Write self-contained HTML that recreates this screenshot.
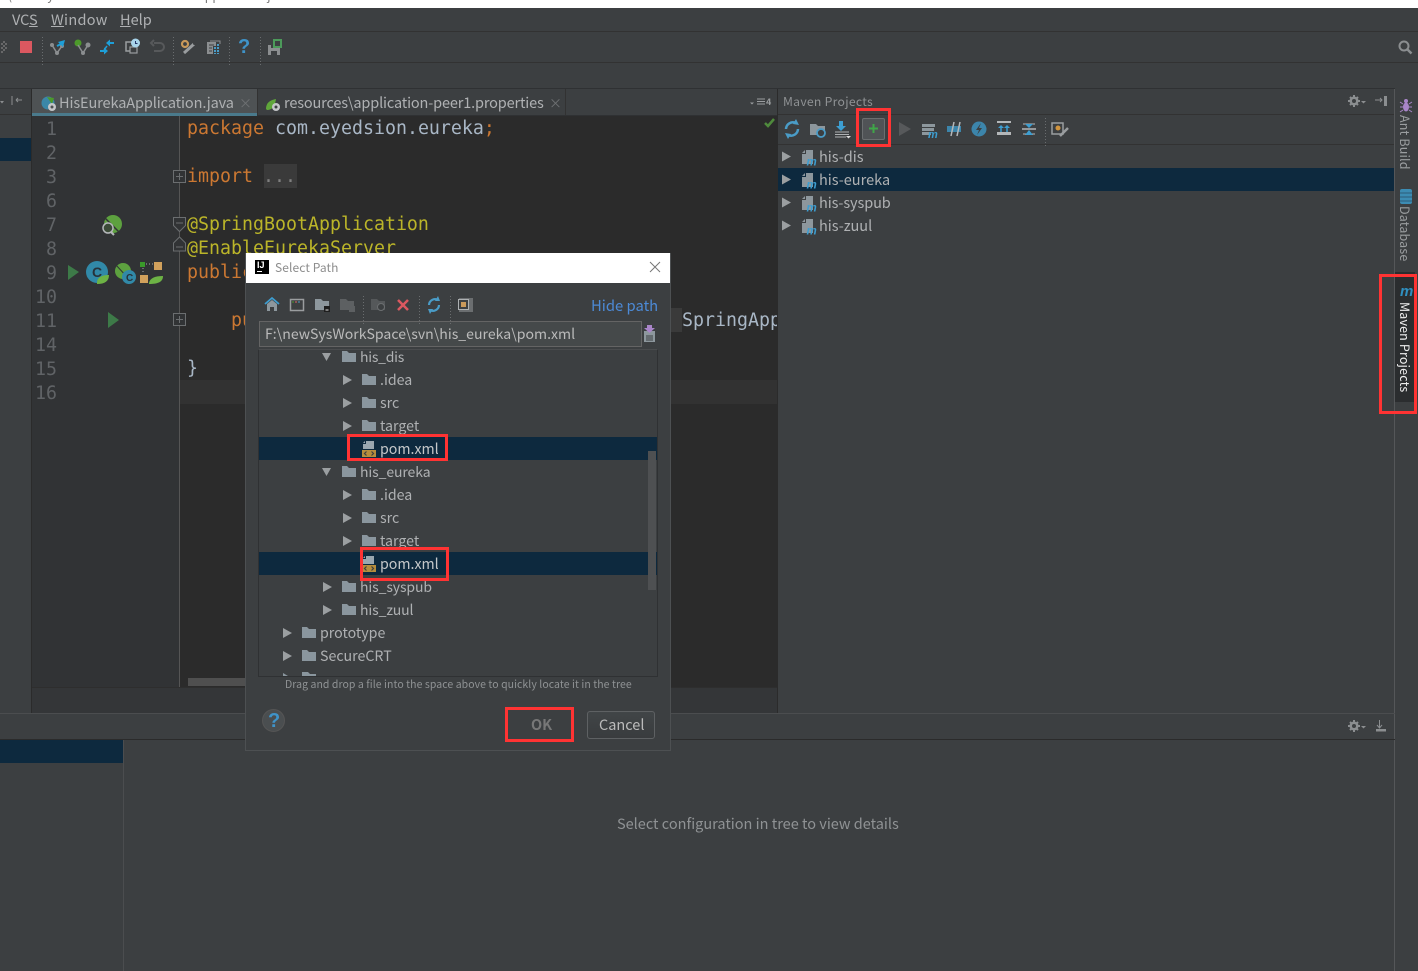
<!DOCTYPE html>
<html><head><meta charset="utf-8"><title>Select Path</title>
<style>
html,body{margin:0;padding:0;background:#3c3f41;width:1418px;height:971px;overflow:hidden}
#r{position:relative;width:1418px;height:971px;overflow:hidden;font-family:"Noto Sans CJK SC","Liberation Sans",sans-serif;font-size:14.5px;color:#afb1b3}
.b{position:absolute}
.t{position:absolute;white-space:nowrap}
.c{position:absolute;white-space:nowrap;font-family:"DejaVu Sans Mono","Liberation Mono",monospace;font-size:18.27px;line-height:24px;height:24px;color:#a9b7c6}
.n{position:absolute;width:30px;left:27px;text-align:right;font-family:"DejaVu Sans Mono","Liberation Mono",monospace;font-size:18.27px;line-height:24px;color:#606366}
.k{color:#cc7832}.a{color:#bbb529}
.ro{position:absolute;white-space:nowrap;line-height:23px;height:23px;color:#afb1b3;font-size:14.5px}
.d{font-size:14.2px;margin-top:1px}
.u{font-size:14px;letter-spacing:-.1px;margin-top:1px}
.rd{position:absolute;border:3px solid #f33;box-sizing:border-box}
.v{position:absolute;writing-mode:vertical-rl;white-space:nowrap;font-size:12.5px;line-height:14px;letter-spacing:.15px}
svg{position:absolute;left:0;top:0;overflow:visible}
</style></head><body><div id="r">
<svg width="0" height="0"><defs>
<g id="fo"><path d="M0 1h5l2 2h7v9H0z" fill="#8a969e"/></g>
<g id="ar"><path d="M0 0l9 5-9 5z" fill="#9b9fa1"/></g>
<g id="mv"><path d="M5 1h7v14H1V5h4z" fill="#8d979d"/><path d="M1 4l3-3v3z" fill="#8d979d"/><text x="5.500" y="16.500" font-family="Liberation Sans" font-style="italic" font-weight="700" font-size="11.500" fill="#3d9ed1">m</text></g>
<g id="pm"><path d="M4 0h8v8H1V3h3z" fill="#9aa7b0"/><path d="M1 2l2-2v2z" fill="#9aa7b0"/><rect y="9" width="14" height="7" fill="#b68d3c"/><path d="M4.500 10.500l-2 2 2 2M9.500 10.500l2 2-2 2" fill="none" stroke="#3c3f41" stroke-width="1.200"/></g>
<g id="dt"><path d="M0 0v28" stroke="#6a6d6f" stroke-width="1" stroke-dasharray="1 2"/></g>
<g id="ge"><path d="M1354 95v12M1348 101h12M1350 97l8 8M1358 97l-8 8" stroke="#8b8e90" stroke-width="2"/><circle cx="1354" cy="101" r="4.500" fill="#8b8e90"/><circle cx="1354" cy="101" r="2" fill="#3c3f41"/><path d="M1361 101h5l-2.500 2.500z" fill="#8b8e90"/></g>
</defs></svg>

<!-- title strip -->
<div class="b" style="left:0;top:0;width:1418px;height:8px;background:#fff;overflow:hidden"><div class="t" style="left:8px;top:-13px;font-size:12px;color:#777;letter-spacing:.2px">(com.eyedsion.eureka.HisEurekaApplication.java - IntelliJ IDEA 2017.2.2</div></div>
<!-- menu -->
<div class="b" style="left:0;top:8px;width:1418px;height:23px;background:#3c3f41"></div>
<div class="t" style="left:12px;top:9px;line-height:22px">VC<u>S</u></div>
<div class="t" style="left:51px;top:9px;line-height:22px;letter-spacing:.3px"><u>W</u>indow</div>
<div class="t" style="left:120px;top:9px;line-height:22px"><u>H</u>elp</div>
<div class="b" style="left:0;top:31px;width:1418px;height:1px;background:#323232"></div>
<div class="b" style="left:0;top:62px;width:1418px;height:1px;background:#323232"></div>
<div class="b" style="left:0;top:88px;width:1395px;height:1px;background:#2f3133"></div>

<!-- left strip -->
<div class="b" style="left:0;top:89px;width:31px;height:624px;background:#3c3f41"></div>
<div class="b" style="left:0;top:114px;width:31px;height:1px;background:#323232"></div>
<div class="b" style="left:0;top:138px;width:31px;height:23px;background:#0d293e"></div>
<div class="b" style="left:31px;top:89px;width:1px;height:624px;background:#2b2b2b"></div>

<!-- tabs -->
<div class="b" style="left:32px;top:89px;width:746px;height:26px;background:#3c3f41"></div>
<div class="b" style="left:32px;top:89px;width:225px;height:26px;background:#4e5254"></div>
<div class="b" style="left:32px;top:113px;width:225px;height:3px;background:#4a7a8c"></div>
<div class="b" style="left:257px;top:89px;width:1px;height:26px;background:#323232"></div>
<div class="b" style="left:565px;top:89px;width:1px;height:26px;background:#323232"></div>
<div class="b" style="left:257px;top:115px;width:521px;height:1px;background:#2f3133"></div>
<div class="t" style="left:59px;top:92px;line-height:22px;letter-spacing:-.1px">HisEurekaApplication.java</div>
<div class="t" style="left:239px;top:92px;line-height:22px;color:#6f7274;font-size:13px">×</div>
<div class="t" style="left:284px;top:92px;line-height:22px;letter-spacing:-.15px">resources\application-peer1.properties</div>
<div class="t" style="left:549px;top:92px;line-height:22px;color:#6f7274;font-size:13px">×</div>
<div class="t" style="left:766px;top:96px;font-size:9px;line-height:12px;color:#9a9d9f;font-weight:700">4</div>

<!-- gutter + editor -->
<div class="b" style="left:32px;top:116px;width:147px;height:571px;background:#313335"></div>
<div class="b" style="left:179px;top:116px;width:1px;height:571px;background:#555"></div>
<div class="b" style="left:180px;top:116px;width:597px;height:571px;background:#2b2b2b"></div>
<div class="b" style="left:180px;top:380px;width:597px;height:24px;background:#323232"></div>
<div class="b" style="left:188px;top:678px;width:60px;height:8px;background:#4f4f4f"></div>
<div class="b" style="left:32px;top:687px;width:746px;height:26px;background:#343638;border-top:1px solid #2e2e2e;box-sizing:border-box"></div>
<div class="b" style="left:777px;top:89px;width:1px;height:624px;background:#2b2b2b"></div>

<div class="n" style="top:118px">1</div><div class="n" style="top:142px">2</div><div class="n" style="top:166px">3</div><div class="n" style="top:190px">6</div><div class="n" style="top:214px">7</div><div class="n" style="top:238px">8</div><div class="n" style="top:262px">9</div><div class="n" style="top:286px">10</div><div class="n" style="top:310px">11</div><div class="n" style="top:334px">14</div><div class="n" style="top:358px">15</div><div class="n" style="top:382px">16</div>

<div class="c" style="left:187px;top:117px"><span class="k">package</span> com.eyedsion.eureka<span class="k">;</span></div>
<div class="c k" style="left:187px;top:165px">import</div>
<div class="b" style="left:264px;top:164px;width:33px;height:24px;background:#3a3a3a"></div>
<div class="c" style="left:263px;top:165px;color:#808080">...</div>
<div class="c a" style="left:187px;top:213px">@SpringBootApplication</div>
<div class="c a" style="left:187px;top:237px">@EnableEurekaServer</div>
<div class="c k" style="left:187px;top:261px">public</div>
<div class="c k" style="left:231px;top:309px">pu</div>
<div class="b" style="left:670px;top:308px;width:12px;height:24px;background:#3a3a3a"></div>
<div class="b" style="left:682px;top:308px;width:95px;height:24px;overflow:hidden"><div class="c" style="left:0;top:1px">SpringApplication</div></div>
<div class="c" style="left:187px;top:357px">}</div>

<!-- Maven panel -->
<div class="b" style="left:778px;top:89px;width:616px;height:25px;background:#3c3f41"></div>
<div class="b" style="left:778px;top:114px;width:616px;height:1px;background:#323232"></div>
<div class="b" style="left:778px;top:144px;width:616px;height:1px;background:#323232"></div>
<div class="t" style="left:783px;top:91px;font-size:12.2px;line-height:20px;color:#8f9294;letter-spacing:.28px">Maven Projects</div>
<div class="b" style="left:778px;top:168px;width:616px;height:23px;background:#0d293e"></div>
<div class="ro" style="left:819px;top:145px">his-dis</div>
<div class="ro" style="left:819px;top:168px">his-eureka</div>
<div class="ro" style="left:819px;top:191px;letter-spacing:-.1px">his-syspub</div>
<div class="ro" style="left:819px;top:214px">his-zuul</div>
<div class="b" style="left:862px;top:118px;width:23px;height:22px;background:#505356;border:1px solid #6b6e70;border-radius:2px;box-sizing:border-box"></div>

<!-- right strip -->
<div class="b" style="left:1394px;top:89px;width:1px;height:882px;background:#555759"></div>
<div class="b" style="left:1395px;top:272px;width:20px;height:130px;background:#2b2d2f"></div>
<div class="v" style="left:1398px;top:115px;color:#9b9ea0">Ant Build</div>
<div class="v" style="left:1398px;top:206px;color:#9b9ea0">Database</div>
<div class="v" style="left:1398px;top:302px;color:#eee">Maven Projects</div>

<!-- bottom panel -->
<div class="b" style="left:0;top:713px;width:1395px;height:1px;background:#4b4d4f"></div>
<div class="b" style="left:0;top:739px;width:1395px;height:1px;background:#2b2b2b"></div>
<div class="b" style="left:0;top:740px;width:123px;height:23px;background:#0d293e"></div>
<div class="b" style="left:123px;top:740px;width:1px;height:231px;background:#4b4d4f"></div>
<div class="t" style="left:617px;top:813px;line-height:22px;color:#8f9294;font-size:14.5px">Select configuration in tree to view details</div>

<div class="t" style="left:238px;top:35px;font-family:'Liberation Sans';font-weight:700;font-size:20px;line-height:24px;color:#3f93c8">?</div>

<!-- base icons -->
<svg width="1418" height="971">
<g id="tb">
<path d="M1 44h2M5 44h2M3 42h2M3 46h2M1 48h2M5 48h2M3 50h2M1 52h2" stroke="#777" stroke-width="1.500"/>
<rect x="20" y="41" width="12" height="12" fill="#db5860"/>
<use href="#dt" x="42.500" y="37"/>
<circle cx="52" cy="45" r="2" fill="#8b8e90"/><circle cx="62" cy="46" r="2" fill="#8b8e90"/><circle cx="57" cy="53" r="2" fill="#8b8e90"/><path d="M52 45l5 8 5-7" stroke="#8b8e90" fill="none" stroke-width="1.500"/><path d="M65 40l-2 7-5-5z" fill="#1e9fd8"/><path d="M61 44l-4 2" stroke="#1e9fd8" stroke-width="2"/>
<circle cx="78" cy="43" r="3.500" fill="#4c9a2a"/><circle cx="88" cy="45" r="2.500" fill="#8b8e90"/><circle cx="83" cy="53" r="2" fill="#8b8e90"/><path d="M78 45l5 8 5-8" stroke="#8b8e90" fill="none" stroke-width="1.500"/>
<path d="M114 43h-6M100 51h6" stroke="#1e9fd8" stroke-width="2"/><path d="M106 43l4-3.500v7zM108 51l-4-3.500v7z" fill="#1e9fd8"/><path d="M107 46l-3 4" stroke="#1e9fd8" stroke-width="1.500"/>
<rect x="126" y="42" width="10" height="9" fill="none" stroke="#9a9d9f" stroke-width="1.500"/><rect x="130" y="47" width="7" height="6" fill="#3c3f41" stroke="#9a9d9f" stroke-width="1.200"/><circle cx="135.500" cy="43" r="4.500" fill="#a8d4ea"/><path d="M135.500 41v2.500h2" stroke="#236" fill="none"/>
<path d="M154 43h6a4 4 0 0 1 0 8h-6M154 40l-3 3 3 3" fill="none" stroke="#57595b" stroke-width="2"/>
<use href="#dt" x="173.500" y="37"/>
<path d="M184 53l10-9" stroke="#9a9d9f" stroke-width="3"/><circle cx="194.500" cy="43.500" r="1.500" fill="#3c3f41"/><circle cx="185" cy="44" r="3" fill="#3c3f41" stroke="#c9995a" stroke-width="2.200"/>
<path d="M207 42h9v4h-3v8h-6z" fill="#8b8e90"/><path d="M209 45h5M209 48h3M209 51h3" stroke="#3c3f41"/><path d="M214 47h2v2h-2zM217 47h2v2h-2zM214 50h2v2h-2zM217 50h2v2h-2zM214 53h2v1h-2zM217 53h2v1h-2zM217 44h2v2h-2z" fill="#4a9cc7"/><path d="M210 41h10v3" fill="none" stroke="#8b8e90"/>
<use href="#dt" x="229.500" y="37"/>
<use href="#dt" x="260.500" y="37"/>
<path d="M268 45h10l2 2v8h-12z" fill="#8b8e90"/><rect x="271" y="45" width="6" height="3" fill="#3c3f41"/><rect x="271" y="51" width="6" height="4" fill="#3c3f41"/><path d="M273 39h9v9h-9z" fill="#4c9a5a"/><rect x="275" y="41" width="5" height="5" fill="#3c3f41"/>
<circle cx="1404" cy="46" r="4.500" fill="none" stroke="#8b8e90" stroke-width="2"/><path d="M1407.500 49.500l4 4" stroke="#8b8e90" stroke-width="2.500"/>
</g>
<!-- tab icons -->
<path d="M0 101h4l-2 2.500z" fill="#8b8e90"/>
<circle cx="48" cy="103" r="6.500" fill="#3b87a8"/><path d="M47 97l7 1-2 6z" fill="#4c9a2a"/><circle cx="52" cy="107" r="4" fill="#c4c6c8"/><circle cx="52" cy="107" r="1.500" fill="#4e5254"/>
<path d="M266 109c0-7 5-9 10-10-1 6-3 11-9 11z" fill="#5fa63a"/><circle cx="276" cy="107" r="4" fill="#c4c6c8"/><circle cx="276" cy="107" r="1.500" fill="#3c3f41"/>
<path d="M12 96v9M16 100h6M16 100l2-2M16 100l2 2" stroke="#8b8e90" fill="none"/>
<path d="M750 102.500h4l-2 2z" fill="#9a9d9f"/><path d="M757 99h8M757 101.500h8M757 104h8" stroke="#9a9d9f"/>
<path d="M765 123l3 3 6-7" stroke="#4f8a3c" stroke-width="2.500" fill="none"/>
<!-- gutter icons -->
<circle cx="113" cy="224" r="9" fill="#5da13f"/><path d="M105 218l14 14" stroke="#313335" stroke-width="1.500"/><circle cx="108" cy="228" r="5" fill="#3c4b38" stroke="#b4b7b9" stroke-width="1.500"/><path d="M111 232l3 3" stroke="#b4b7b9" stroke-width="2"/>
<path d="M68 265l11 7-11 8z" fill="#3d7a48"/>
<circle cx="97" cy="272" r="11" fill="#3189a8"/><text x="92" y="277" font-family="Liberation Sans" font-size="14" font-weight="700" fill="#27323a">C</text><path d="M97 283c0-6 5-8 12-8 0 6-4 9-12 9z" fill="#6db345"/>
<circle cx="123" cy="271" r="8" fill="#5da13f"/><path d="M116 265l12 13" stroke="#313335"/><circle cx="129" cy="277" r="7" fill="#3189a8"/><text x="126" y="281" font-family="Liberation Sans" font-size="10" font-weight="700" fill="#27323a">C</text>
<rect x="140" y="262" width="5" height="5" fill="#3a9a2a"/><rect x="154" y="262" width="8" height="8" fill="#d1a15c"/><rect x="140" y="275" width="8" height="8" fill="#d1a15c"/><path d="M146 264h7M143 268v6" stroke="#a5a8aa" stroke-dasharray="1 2"/><path d="M149 283c1-5 6-7 14-7 0 6-5 8-14 8z" fill="#6db345"/>
<path d="M108 312l11 8-11 8z" fill="#3d7a48"/>
<!-- fold marks -->
<g fill="#313335" stroke="#6b6e70"><rect x="173.500" y="170.500" width="12" height="12"/><path d="M176 176.500h7M179.500 173v7"/><path d="M173.500 217.500h12v8l-6 6-6-6z"/><path d="M176 223h7"/><path d="M179.500 237l6 6v8h-12v-8z"/><path d="M176 247h7"/><rect x="173.500" y="313.500" width="12" height="12"/><path d="M176 319.500h7M179.500 316v7"/></g>
<!-- maven toolbar -->
<path d="M786 129a7 7 0 0 1 10-6M798 129a7 7 0 0 1-10 6" stroke="#4a9cc7" stroke-width="2.500" fill="none"/><path d="M796 119l3 6-6-1zM788 139l-3-6 6 1z" fill="#4a9cc7"/>
<path d="M810 124h6l2 2h7v9h-15z" fill="#8d979d"/><circle cx="821" cy="133" r="4" fill="#3c3f41" stroke="#4a9cc7" stroke-width="1.800"/>
<path d="M839 121h4v5h3l-5 5-5-5h3z" fill="#3d9ed1"/><path d="M835 132h14M835 134.500h14M835 137h11" stroke="#aeb1b3"/><path d="M846 136h5l-2.500 2.500z" fill="#ddd"/>
<path d="M869 128.500h9M873.500 124v9" stroke="#3fa648" stroke-width="2"/>
<path d="M899 122l12 7-12 7z" fill="#57595b"/>
<path d="M922 124h13v3h-13zM922 128h12v3h-12M922 132h9v3h-9" fill="#8d979d"/><text x="928" y="138" font-family="Liberation Sans" font-style="italic" font-weight="700" font-size="11" fill="#3d9ed1">m</text>
<rect x="947" y="126" width="14" height="6" fill="#3c85ab"/><path d="M951 136l3-14M957 136l3-14" stroke="#b4b7b9" stroke-width="1.500"/>
<circle cx="979" cy="129" r="7.500" fill="#3c85ab"/><path d="M981 123l-5 7h3l-2 5 5-7h-3z" fill="#3c3f41"/>
<path d="M997 122h14" stroke="#b4b7b9" stroke-width="2"/><path d="M1001 132v-5M1007 132v-5" stroke="#3d9ed1" stroke-width="1.500"/><path d="M998 128l3-3 3 3zM1004 128l3-3 3 3z" fill="#3d9ed1"/><rect x="997" y="132" width="14" height="3" fill="#b4b7b9"/>
<path d="M1022 129h14" stroke="#b4b7b9" stroke-width="1.500"/><path d="M1023 124h12M1023 134h12" stroke="#b4b7b9"/><path d="M1029 128l-4-4h8zM1029 130l-4 5h8z" fill="#3d9ed1"/>
<use href="#dt" x="1045.500" y="118"/>
<rect x="1052" y="123" width="11" height="11" fill="none" stroke="#9a9d9f" stroke-width="1.500"/><circle cx="1058" cy="128" r="2.500" fill="#d1953f"/><path d="M1060 136l8-8" stroke="#9a9d9f" stroke-width="2.500"/>
<!-- maven rows -->
<use href="#ar" x="782" y="151.500"/><use href="#ar" x="782" y="174.500"/><use href="#ar" x="782" y="197.500"/><use href="#ar" x="782" y="220.500"/>
<use href="#mv" x="801" y="149"/><use href="#mv" x="801" y="172"/><use href="#mv" x="801" y="195"/><use href="#mv" x="801" y="218"/>
<!-- header right -->
<use href="#ge"/>
<path d="M1375 100h7M1380 98l2 2-2 2" stroke="#8b8e90" fill="none"/><rect x="1384" y="96" width="3" height="10" fill="#8b8e90"/>
<use href="#ge" y="625"/>
<path d="M1379.500 720v8M1377 725l2.500 3 2.500-3" stroke="#8b8e90" fill="none"/><rect x="1376" y="729" width="10" height="2.500" fill="#8b8e90"/>
<!-- strip icons -->
<ellipse cx="1406" cy="107" rx="3" ry="4.500" fill="#a985c9"/><circle cx="1406" cy="101" r="2" fill="#a985c9"/><path d="M1400 102l3 2M1412 102l-3 2M1400 107h3M1412 107h-3M1400 112l3-2M1412 112l-3-2" stroke="#a985c9"/>
<rect x="1400" y="189" width="12" height="15" rx="2" fill="#3c8cb3"/><path d="M1400 193h12M1400 197h12M1400 201h12" stroke="#2c5d78"/>
<text x="1400" y="296" font-family="Liberation Sans" font-style="italic" font-weight="700" font-size="15" fill="#2f8fc0">m</text>
</svg>

<!-- DIALOG -->
<div class="b" style="left:245px;top:253px;width:426px;height:498px;background:#3c3f41;border:1px solid #4d5052;box-sizing:border-box"></div>
<div class="b" style="left:246px;top:253px;width:424px;height:30px;background:#fff"></div>
<div class="b" style="left:255px;top:260px;width:14px;height:14px;background:#000"></div>
<div class="t" style="left:257px;top:260px;font-family:'Liberation Sans';font-weight:700;font-size:9px;line-height:10px;color:#fff">IJ</div>
<div class="b" style="left:257px;top:271px;width:5px;height:1px;background:#fff"></div>
<div class="t" style="left:275px;top:258px;font-size:12px;line-height:20px;color:#8d8d8d;letter-spacing:.1px">Select Path</div>
<div class="t" style="left:591px;top:295px;font-size:14.8px;line-height:22px;color:#4c8ad6">Hide path</div>
<div class="b" style="left:259px;top:321px;width:383px;height:26px;background:#45494a;border:1px solid #646464;box-sizing:border-box"></div>
<div class="t" style="left:265px;top:323px;line-height:22px;font-size:14.1px;color:#bbb">F:\newSysWorkSpace\svn\his_eureka\pom.xml</div>
<div class="b" style="left:258px;top:349px;width:400px;height:328px;border:1px solid #2f3133;border-top:1px solid #4a4c4e;box-sizing:border-box;background:#3c3f41"></div>
<div class="b" style="left:259px;top:437px;width:398px;height:23px;background:#0d293e"></div>
<div class="b" style="left:259px;top:552px;width:398px;height:23px;background:#0d293e"></div>
<div class="b" style="left:648px;top:451px;width:8px;height:139px;background:#4e5052"></div>

<div class="ro u" style="left:360px;top:345px;letter-spacing:-.25px">his_dis</div>
<div class="ro d" style="left:380px;top:368px">.idea</div>
<div class="ro d" style="left:380px;top:391px">src</div>
<div class="ro d" style="left:380px;top:414px">target</div>
<div class="ro d" style="left:380px;top:437px;color:#c5c8ca">pom.xml</div>
<div class="ro u" style="left:360px;top:460px">his_eureka</div>
<div class="ro d" style="left:380px;top:483px">.idea</div>
<div class="ro d" style="left:380px;top:506px">src</div>
<div class="ro d" style="left:380px;top:529px">target</div>
<div class="ro d" style="left:380px;top:552px;color:#c5c8ca">pom.xml</div>
<div class="ro u" style="left:360px;top:575px">his_syspub</div>
<div class="ro u" style="left:360px;top:598px">his_zuul</div>
<div class="ro d" style="left:320px;top:621px">prototype</div>
<div class="ro d" style="left:320px;top:644px">SecureCRT</div>
<div class="t" style="left:285px;top:677px;font-size:10.500px;line-height:15px;color:#8f9294;letter-spacing:.06px">Drag and drop a file into the space above to quickly locate it in the tree</div>

<div class="b" style="left:587px;top:711px;width:68px;height:28px;border:1px solid #5e6163;border-radius:3px;background:linear-gradient(#414547,#393c3e);box-sizing:border-box"></div>
<div class="t" style="left:599px;top:714px;line-height:22px;color:#bbb">Cancel</div>
<div class="t" style="left:531px;top:714px;line-height:22px;color:#777;font-weight:700">OK</div>
<div class="b" style="left:262px;top:709px;width:23px;height:23px;border-radius:50%;background:#4a4e50;border:1px solid #555;box-sizing:border-box"></div>
<div class="t" style="left:268px;top:709px;font-family:'Liberation Sans';font-weight:700;font-size:20px;line-height:24px;color:#3f93c8">?</div>

<svg width="1418" height="971">
<!-- dialog toolbar -->
<path d="M267 304v7h3v-4h4v4h3v-7l-5-4z" fill="#8d979d"/><path d="M265 304l7-6 7 6" fill="none" stroke="#3d9ed1" stroke-width="1.800"/>
<rect x="290.500" y="299.500" width="13" height="11" fill="none" stroke="#9a9d9f" stroke-width="1.500"/><path d="M292 302h2" stroke="#4c9a2a"/><path d="M295 302h2" stroke="#d66"/><path d="M298 302h2" stroke="#4a9cc7"/>
<path d="M315 299h6l2 2h6v9h-14z" fill="#8d979d"/><rect x="324" y="306" width="6" height="6" fill="#1e1e1e"/><path d="M325.500 310h3" stroke="#ddd"/>
<path d="M340 299h6l2 2h6v9h-14z" fill="#5d6062"/><rect x="349" y="306" width="6" height="6" fill="#5d6062"/>
<use href="#dt" x="363.500" y="296"/>
<path d="M371 299h6l2 2h6v9h-14z" fill="#55585a"/><circle cx="381" cy="307" r="3.500" fill="#3c3f41" stroke="#6b6e70"/>
<path d="M398 300l10 10M408 300l-10 10" stroke="#db5860" stroke-width="2.500"/>
<use href="#dt" x="419.500" y="296"/>
<path d="M429 305a6 6 0 0 1 9-5M439 305a6 6 0 0 1-9 5" stroke="#4a9cc7" stroke-width="2.200" fill="none"/><path d="M438 296l2 5-5 0zM430 314l-2-5 5 0z" fill="#4a9cc7"/>
<use href="#dt" x="450.500" y="296"/>
<rect x="459" y="298" width="14" height="14" fill="#6b6e70"/><rect x="458.500" y="299.500" width="10" height="10" fill="#3c3f41" stroke="#aeb1b3"/><rect x="461" y="302" width="5" height="5" fill="#c9995a"/>
<rect x="644" y="331" width="11" height="11" fill="#8d979d"/><path d="M646 336h7M646 338h7M646 340h7" stroke="#3c3f41"/><path d="M647 325h5v3h3l-5.500 5-5.500-5h3z" fill="#a985c9"/>
<!-- tree icons -->
<path d="M322 353l9 0-4.500 8z" fill="#9b9fa1"/><use href="#fo" x="342" y="350"/>
<use href="#ar" x="343" y="375"/><use href="#fo" x="362" y="373"/>
<use href="#ar" x="343" y="398"/><use href="#fo" x="362" y="396"/>
<use href="#ar" x="343" y="421"/><use href="#fo" x="362" y="419"/>
<use href="#pm" x="362" y="441"/>
<path d="M322 468l9 0-4.500 8z" fill="#9b9fa1"/><use href="#fo" x="342" y="465"/>
<use href="#ar" x="343" y="490"/><use href="#fo" x="362" y="488"/>
<use href="#ar" x="343" y="513"/><use href="#fo" x="362" y="511"/>
<use href="#ar" x="343" y="536"/><use href="#fo" x="362" y="534"/>
<use href="#pm" x="362" y="556"/>
<use href="#ar" x="323" y="582"/><use href="#fo" x="342" y="580"/>
<use href="#ar" x="323" y="605"/><use href="#fo" x="342" y="603"/>
<use href="#ar" x="283" y="628"/><use href="#fo" x="302" y="626"/>
<use href="#ar" x="283" y="651"/><use href="#fo" x="302" y="649"/>
<path d="M283 673l5 3h-5zM302 672h6l2 2h6v2h-14z" fill="#8a969e"/>
<!-- close X -->
<path d="M650 262l10 10M660 262l-10 10" stroke="#777" stroke-width="1"/>
</svg>

<!-- red annotation boxes -->
<div class="rd" style="left:856px;top:108px;width:35px;height:39px"></div>
<div class="rd" style="left:1379px;top:274px;width:38px;height:140px"></div>
<div class="rd" style="left:347px;top:434px;width:101px;height:27px"></div>
<div class="rd" style="left:360px;top:547px;width:89px;height:34px"></div>
<div class="rd" style="left:505px;top:707px;width:69px;height:35px"></div>
</div></body></html>
